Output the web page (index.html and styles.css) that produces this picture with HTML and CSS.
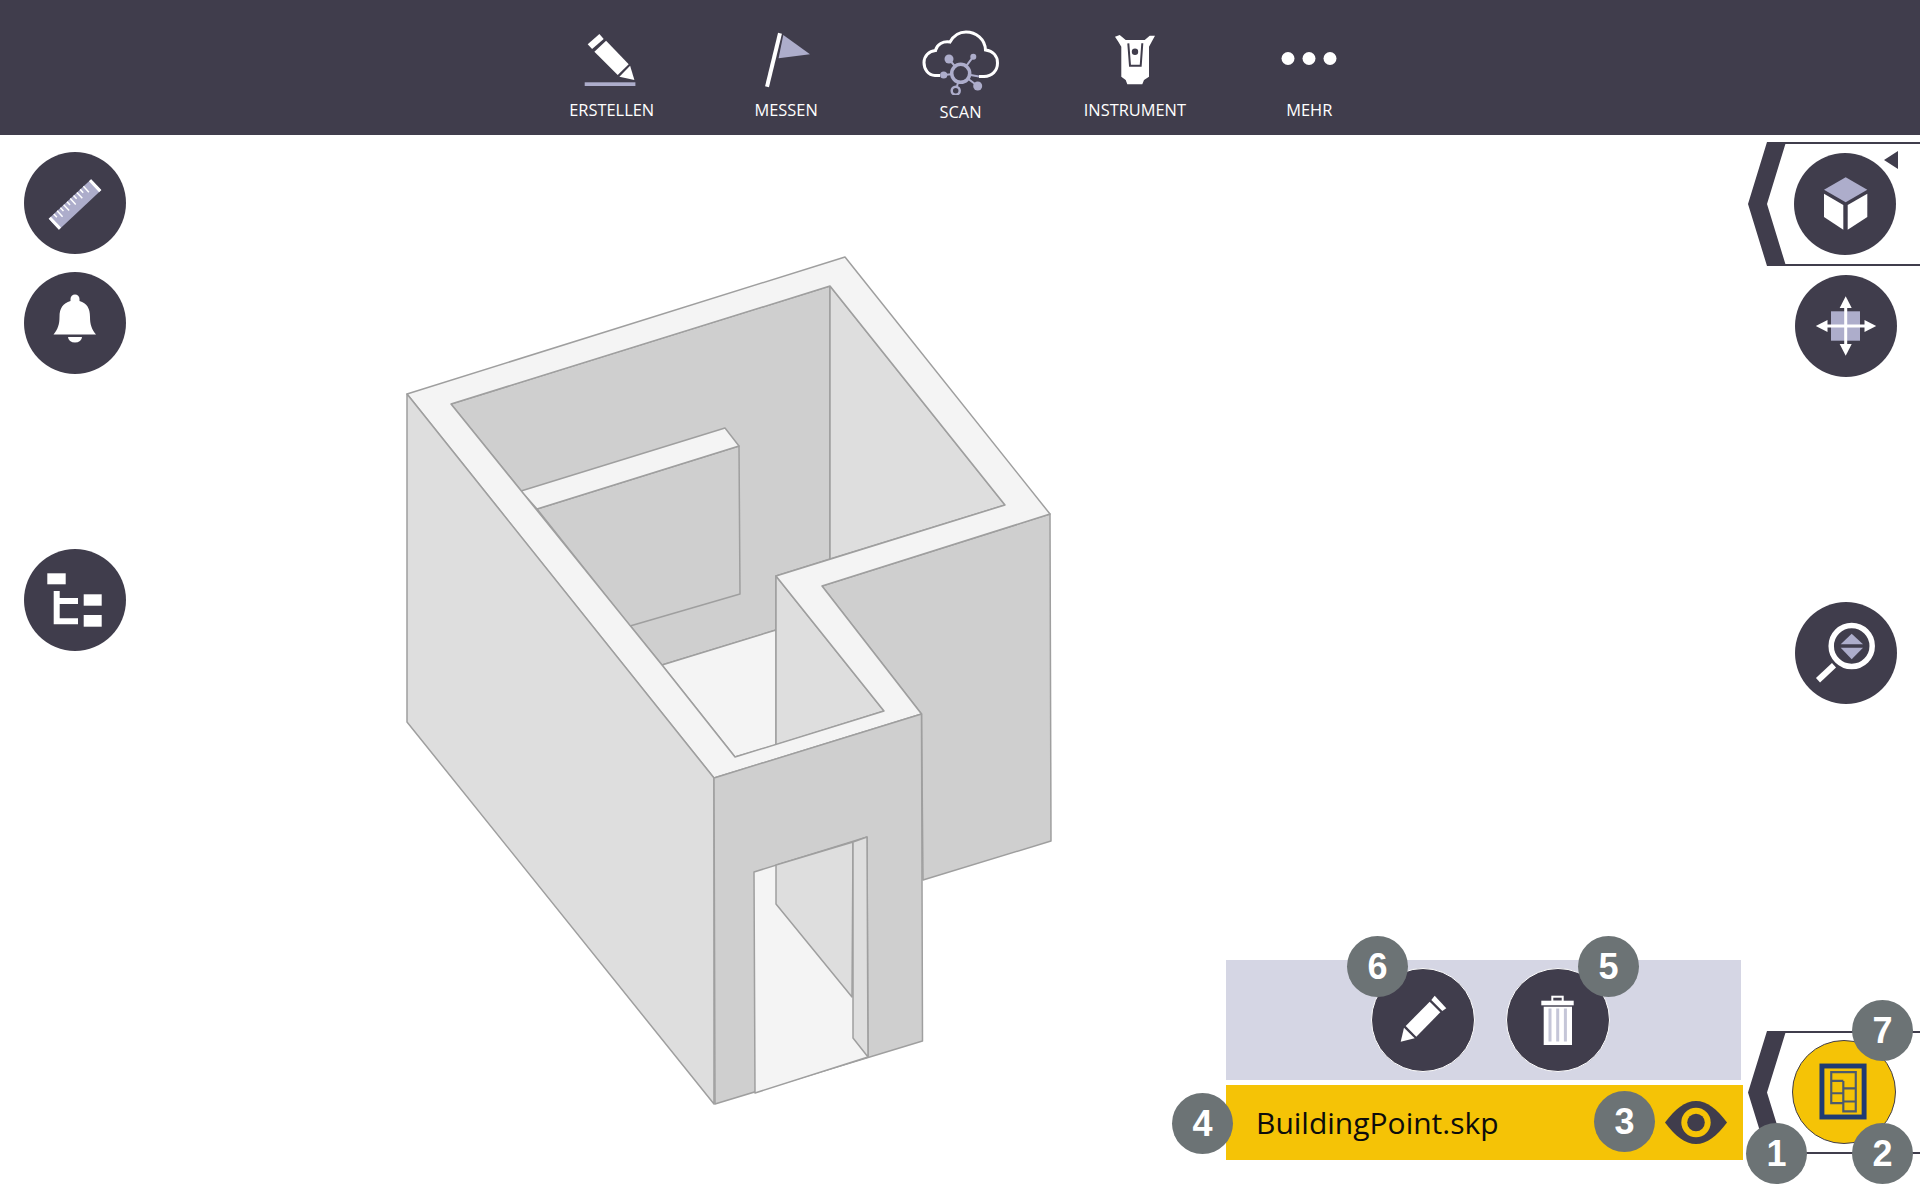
FILE: index.html
```html
<!DOCTYPE html>
<html lang="de">
<head>
<meta charset="utf-8">
<title>BuildingPoint.skp</title>
<link rel="stylesheet" href="styles.css">
</head>
<body>
<header class="topbar">
  <nav class="nav">
    <div class="nav-item">
      <svg class="nav-icon" viewBox="566.6 25 90 70"><polygon class="i-w" points="588.3,44.3 600,34 604.3,39 592.7,49"/><polygon class="i-w" points="595,51.7 606.7,40.7 629.3,64.3 618.3,75"/><polygon class="i-w" points="620,76.7 630.7,65.7 635,80"/><rect class="i-l" x="585.3" y="82.3" width="50.7" height="3.7"/></svg>
      <span class="nav-label">ERSTELLEN</span>
    </div>
    <div class="nav-item">
      <svg class="nav-icon" viewBox="741.7 25 90 70"><line class="s-w s-4" x1="780.7" y1="33.3" x2="767.7" y2="86.7"/><polygon class="i-l" points="784,35 810.7,54.3 779.3,58.3"/></svg>
      <span class="nav-label">MESSEN</span>
    </div>
    <div class="nav-item">
      <svg class="nav-icon" viewBox="916 25 90 70">
        <path class="s-w s-3 no-fill" d="M941 75.5H936C929 75.5 925 69 925 62.5C925 56 930 51 936.5 50.5C938 44 944 41 951 42C955 35 961 32 967 32C977 32 986 39 986.5 50C994 51 998.5 56 998.5 63C998.5 71 993 76 985 76.5H980"/>
        <path class="s-l s-2" d="M950 59L961.7 73.3M974.3 56.7L961.7 73.3M944.7 75L961.7 73.3M956.7 90.7L961.7 73.3M978.7 86L961.7 73.3M980 76.5L961.7 73.3"/>
        <circle class="ring" cx="961.7" cy="73.3" r="9"/>
        <circle class="dot" cx="950" cy="59" r="4.5"/><circle class="dot" cx="974.3" cy="56.7" r="3"/><circle class="dot" cx="944.7" cy="75" r="3.6"/><circle class="sat" cx="956.7" cy="90.7" r="4"/><circle class="dot" cx="978.7" cy="86" r="4.5"/>
      </svg>
      <span class="nav-label nav-label-low">SCAN</span>
    </div>
    <div class="nav-item">
      <svg class="nav-icon" viewBox="1090 25 90 70">
        <polygon class="i-w" points="1116,36.7 1120.7,35 1126.7,40 1145.7,40 1150.7,35.7 1156,35.7 1152.7,41.7 1150,46.7 1150,76.7 1145,80 1143.3,84.3 1128.3,84.3 1126.7,80 1122.3,76.7 1122.3,46.7 1119.3,41.7"/>
        <path class="s-d s-2 no-fill" d="M1129.3 43.3L1131 65.7H1141.7L1143.3 43.3"/>
        <circle class="i-d" cx="1136" cy="51.7" r="3.2"/>
      </svg>
      <span class="nav-label">INSTRUMENT</span>
    </div>
    <div class="nav-item">
      <svg class="nav-icon" viewBox="1264 25 90 70"><circle class="i-w" cx="1288" cy="58.5" r="6.5"/><circle class="i-w" cx="1309" cy="58.5" r="6.5"/><circle class="i-w" cx="1330" cy="58.5" r="6.5"/></svg>
      <span class="nav-label">MEHR</span>
    </div>
  </nav>
</header>

<main class="stage">
  <svg class="model" viewBox="0 135 1920 1065">
    <polygon class="m-dark" points="1050,514 822,586 921.5,714 923,880 1051,841"/>
    <polygon class="m-dark" points="451,404 830,286 830,559 776,576 776,630 662,665"/>
    <polygon class="m-mid" points="830,286 1005,505 830,559"/>
    <polygon class="m-light" points="662,665 776,630 776,745 735,757"/>
    <polygon class="m-mid" points="776,576 884,711 776,745"/>
    <polygon class="m-dark" points="537,509 739,446 740,594 630,626"/>
    <polygon class="m-light" points="521,491 725,428 739,446 537,509"/>
    <path class="m-light m-even" d="M407 394L845 257L1050 514L822 586L921.5 714L714 778ZM451 404L830 286L1005 505L776 576L884 711L735 757L662 665Z"/>
    <polygon class="m-mid" points="407,394 714,778 714,1104 407,722"/>
    <polygon class="m-dark" points="714,778 921.5,714 922.5,1041 715,1104"/>
    <polygon class="m-light" points="754,872 867,837 868,1057 755,1093"/>
    <polygon class="m-mid" points="776,865 853,842 852,997 776,904"/>
    <polygon class="m-mid" points="853,842 867,837 868,1057 853,1038"/>
  </svg>

  <div class="rail-left">
    <button class="round">
      <svg class="round-icon" viewBox="0 0 102 102"><g transform="translate(24.7 66.7) rotate(-43)"><rect class="i-l" width="58" height="15"/><rect class="i-w" width="3" height="15"/><rect class="i-w" x="55" width="3" height="15"/><path class="s-w s-1" d="M7 0V4.5M11.5 0V8M16 0V4.5M20.5 0V8M25 0V4.5M29.5 0V8M34 0V4.5M38.5 0V8M43 0V4.5M47.5 0V8"/></g></svg>
    </button>
    <button class="round">
      <svg class="round-icon" viewBox="0 0 102 102"><path class="i-w" d="M29.5 62.5C34 57 35.5 52 35.5 45C35.5 36 39 31.5 46.5 29V27A4.5 4.5 0 0 1 55.5 27V29C63 31.5 66 36 66 45C66 52 67.5 57 72 62.5Z"/><path class="i-w" d="M44 65H58A7 5.5 0 0 1 44 65Z"/></svg>
    </button>
    <button class="round round-tree">
      <svg class="round-icon" viewBox="0 0 102 102"><rect class="i-w" x="23.3" y="24.3" width="18.4" height="11"/><path class="i-w" d="M29.7 42H35.7V49H54V55H35.7V69.3H54V75.3H29.7Z"/><rect class="i-w" x="59.7" y="45.3" width="18" height="11.4"/><rect class="i-w" x="59.7" y="66" width="18" height="11.7"/></svg>
    </button>
  </div>

  <div class="rail-right">
    <div class="palette palette-view">
      <svg class="chevron" viewBox="0 0 40 125" preserveAspectRatio="none"><polygon class="i-d" points="19,0 38,0 19,62.5 38,125 19,125 0,62.5"/></svg>
      <span class="corner"></span>
      <button class="round round-in-palette">
        <svg class="round-icon" viewBox="0 0 102 102"><polygon class="i-l" points="51.7,24.3 73.3,36.7 51.7,49.3 30,36.7"/><polygon class="i-w" points="30,40.7 49.3,52 49.3,76.7 30,64"/><polygon class="i-w" points="53.7,52 73.3,40.7 73.3,64 53.7,76.7"/></svg>
      </button>
    </div>
    <button class="round round-pan">
      <svg class="round-icon" viewBox="0 0 102 102"><rect class="i-l" x="36" y="36.3" width="29" height="29.4"/><path class="s-w s-3" d="M50.7 28V74M28 51H74"/><polygon class="i-w" points="50.7,21.2 56.7,33 44.7,33"/><polygon class="i-w" points="50.7,80.8 56.7,69 44.7,69"/><polygon class="i-w" points="20.8,51 32.5,45 32.5,57"/><polygon class="i-w" points="81.2,51 69.5,45 69.5,57"/></svg>
    </button>
    <button class="round round-zoom">
      <svg class="round-icon" viewBox="0 0 102 102"><circle class="ring-w" cx="56.7" cy="44" r="20.5"/><line class="s-w s-6" x1="39" y1="63.3" x2="23" y2="78.3"/><polygon class="i-l" points="56.7,31.7 68,42.3 45.7,42.3"/><polygon class="i-l" points="45.7,45.7 68,45.7 56.7,57.3"/></svg>
    </button>
  </div>

  <div class="dock">
    <div class="file-panel">
      <div class="file-actions">
        <button class="round round-ringed">
          <svg class="round-icon" viewBox="0 0 102 102"><polygon class="i-w" points="28.7,72.7 32,58.7 42.7,69.3"/><polygon class="i-w" points="33.7,57 57.7,32.7 68.3,43.3 44.3,67.7"/><polygon class="i-w" points="59.3,31 62.7,26.7 74.3,39.3 70.3,42"/></svg>
          <span class="badge badge-6">6</span>
        </button>
        <button class="round round-ringed">
          <svg class="round-icon" viewBox="0 0 102 102"><rect class="i-w" x="34.3" y="31.7" width="32.4" height="4.6"/><rect class="handle" x="45.3" y="27.7" width="10.4" height="5"/><rect class="i-w" x="36.7" y="37.7" width="28.3" height="38.3"/><rect class="stripe" x="41.5" y="39.5" width="3" height="33"/><rect class="stripe" x="49.2" y="39.5" width="3" height="33"/><rect class="stripe" x="56.9" y="39.5" width="3" height="33"/></svg>
          <span class="badge badge-5">5</span>
        </button>
      </div>
      <div class="file-row">
        <span class="badge badge-4">4</span>
        <span class="file-name">BuildingPoint.skp</span>
        <span class="badge badge-3">3</span>
        <svg class="eye" viewBox="0 0 62 43"><path class="i-d" d="M0 21.5C10 8 20 0 31 0C42 0 52 8 62 21.5C52 35 42 43 31 43C20 43 10 35 0 21.5Z"/><circle class="i-y" cx="31" cy="21.5" r="14.7"/><circle class="i-d" cx="31" cy="21.5" r="8.8"/></svg>
      </div>
    </div>
    <div class="palette palette-layer">
      <svg class="chevron" viewBox="0 0 40 125" preserveAspectRatio="none"><polygon class="i-d" points="19,0 38,0 19,62.5 38,125 19,125 0,62.5"/></svg>
      <button class="round round-active">
        <svg class="round-icon" viewBox="0 0 104 104"><rect class="plan-frame" x="29.5" y="25.5" width="43" height="52"/><path class="plan-lines" d="M39 31.7H64V71.7H51.3V63.3H39ZM39 40.7H51.3M51.3 40.7V63.3M51.3 48.3H64M39 53.3H51.3M51.3 61.7H64"/></svg>
      </button>
      <span class="badge badge-7">7</span>
      <span class="badge badge-1">1</span>
      <span class="badge badge-2">2</span>
    </div>
  </div>
</main>
</body>
</html>
```

FILE: styles.css
```css
* { box-sizing: border-box; }
html, body { margin: 0; padding: 0; }
body { width: 1920px; height: 1200px; overflow: hidden; background: #fff; font-family: "Open Sans", "Liberation Sans", sans-serif; }

.topbar { height: 135px; background: #403d4c; padding-top: 25px; }
.nav { display: flex; justify-content: center; }
.nav-item { width: 174.4px; display: flex; flex-direction: column; align-items: center; }
.nav-icon { width: 90px; height: 70px; display: block; }
.nav-label { color: #fff; font-size: 16.4px; line-height: 30px; padding-left: 1px; }
.nav-label-low { padding-top: 2px; }

.stage { position: relative; height: 1065px; }
.model { position: absolute; left: 0; top: 0; width: 1920px; height: 1065px; }
.m-dark, .m-mid, .m-light { stroke: #9f9f9f; stroke-width: 1.5; stroke-linejoin: round; }
.m-dark { fill: #cfcfcf; }
.m-mid { fill: #dedede; }
.m-light { fill: #f4f4f4; }
.m-even { fill-rule: evenodd; }

.i-w { fill: #fff; }
.i-l { fill: #adadcb; }
.i-d { fill: #403d4c; }
.i-y { fill: #f5c306; }
.no-fill { fill: none; }
.s-w { stroke: #fff; fill: none; }
.s-l { stroke: #adadcb; fill: none; }
.s-d { stroke: #403d4c; fill: none; }
.s-1 { stroke-width: 1.5; }
.s-2 { stroke-width: 2; }
.s-3 { stroke-width: 3; }
.s-4 { stroke-width: 4; }
.s-6 { stroke-width: 6; }
.ring { fill: #403d4c; stroke: #adadcb; stroke-width: 3.5; }
.ring-w { fill: none; stroke: #fff; stroke-width: 5.5; }
.dot { fill: #adadcb; }
.sat { fill: #403d4c; stroke: #adadcb; stroke-width: 2.5; }
.handle { fill: none; stroke: #fff; stroke-width: 2; }
.stripe { fill: #c5c6d8; }
.plan-frame { fill: none; stroke: #1f3b73; stroke-width: 5; }
.plan-lines { fill: none; stroke: #4c5a6e; stroke-width: 2.2; }

.round { position: relative; width: 102px; height: 102px; padding: 0; border: 0; border-radius: 50%; background: #403d4c; display: block; flex: none; }
.round-icon { display: block; width: 100%; height: 100%; }

.rail-left { position: absolute; left: 24px; top: 17px; display: flex; flex-direction: column; gap: 18px; }
.round-tree { margin-top: 157px; }

.rail-right { position: absolute; right: 0; top: 7px; display: flex; flex-direction: column; align-items: flex-end; }
.round-pan { margin: 9px 23px 0 0; }
.round-zoom { margin: 225px 23px 0 0; }

.palette { position: relative; width: 153px; border-top: 2px solid #403d4c; border-bottom: 2px solid #403d4c; }
.palette-view { height: 124px; padding: 9px 0 0 27px; }
.chevron { position: absolute; left: -19px; top: -2px; width: 40px; height: calc(100% + 4px); }
.corner { position: absolute; left: 117px; top: 7px; width: 0; height: 0; border-style: solid; border-width: 9px 14px 9px 0; border-color: transparent #403d4c transparent transparent; }

.dock { position: absolute; right: 0; top: 825px; display: flex; }
.file-panel { width: 517px; }
.file-actions { height: 120px; width: 515px; background: #d5d6e4; display: flex; align-items: center; gap: 31px; padding-left: 145px; }
.round-ringed { width: 104px; height: 104px; border: 1px solid #fff; }
.file-row { position: relative; height: 75px; margin-top: 5px; background: #f5c306; display: flex; align-items: center; padding: 0 16px 0 30px; }
.file-name { color: #0c0c0c; font-size: 30px; line-height: 40px; }
.eye { width: 62px; height: 43px; margin-left: auto; }

.palette-layer { height: 123px; margin: 71px 0 0 24px; padding: 7px 0 0 25px; }
.round-active { width: 104px; height: 104px; background: #f5c306; border: 1px solid #403d4c; }

.badge { position: absolute; width: 61px; height: 61px; border-radius: 50%; background: #6c7375; color: #fff; font: 700 36px/61px "Liberation Sans", sans-serif; text-align: center; }
.badge-6 { left: -25px; top: -33px; }
.badge-5 { left: 71px; top: -33px; }
.badge-4 { left: -54px; top: 8px; }
.badge-3 { left: 368px; top: 6px; }
.badge-7 { left: 85px; top: -33px; }
.badge-1 { left: -21px; top: 90px; }
.badge-2 { left: 85px; top: 90px; }
```
